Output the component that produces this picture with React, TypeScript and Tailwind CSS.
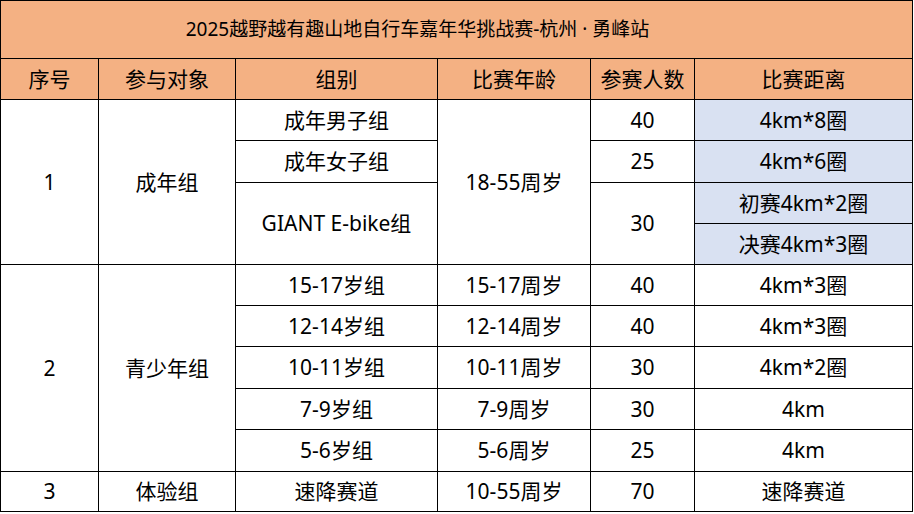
import React from "react";

const font = { fontFamily: '"Noto Sans", "Noto Sans CJK SC", sans-serif' };

type Span = { text: string; span: number };

type Row = {
  h: string;
  no?: Span;
  who?: Span;
  group?: Span;
  age?: Span;
  count?: Span;
  dist: string;
  blue?: boolean;
};

const rows: Row[] = [
  { h: "h-[41px]", no: { text: "1", span: 4 }, who: { text: "成年组", span: 4 }, group: { text: "成年男子组", span: 1 }, age: { text: "18-55周岁", span: 4 }, count: { text: "40", span: 1 }, dist: "4km*8圈", blue: true },
  { h: "h-[42px]", group: { text: "成年女子组", span: 1 }, count: { text: "25", span: 1 }, dist: "4km*6圈", blue: true },
  { h: "h-[41px]", group: { text: "GIANT E-bike组", span: 2 }, count: { text: "30", span: 2 }, dist: "初赛4km*2圈", blue: true },
  { h: "h-[41px]", dist: "决赛4km*3圈", blue: true },
  { h: "h-[41px]", no: { text: "2", span: 5 }, who: { text: "青少年组", span: 5 }, group: { text: "15-17岁组", span: 1 }, age: { text: "15-17周岁", span: 1 }, count: { text: "40", span: 1 }, dist: "4km*3圈" },
  { h: "h-[41px]", group: { text: "12-14岁组", span: 1 }, age: { text: "12-14周岁", span: 1 }, count: { text: "40", span: 1 }, dist: "4km*3圈" },
  { h: "h-[42px]", group: { text: "10-11岁组", span: 1 }, age: { text: "10-11周岁", span: 1 }, count: { text: "30", span: 1 }, dist: "4km*2圈" },
  { h: "h-[41px]", group: { text: "7-9岁组", span: 1 }, age: { text: "7-9周岁", span: 1 }, count: { text: "30", span: 1 }, dist: "4km" },
  { h: "h-[42px]", group: { text: "5-6岁组", span: 1 }, age: { text: "5-6周岁", span: 1 }, count: { text: "25", span: 1 }, dist: "4km" },
  { h: "h-[40px]", no: { text: "3", span: 1 }, who: { text: "体验组", span: 1 }, group: { text: "速降赛道", span: 1 }, age: { text: "10-55周岁", span: 1 }, count: { text: "70", span: 1 }, dist: "速降赛道" },
];

const cell = "border border-black text-center align-middle p-0 leading-none";

function Cell({ c }: { c?: Span }) {
  if (!c) return null;
  return (
    <td rowSpan={c.span} className={cell}>
      {c.text}
    </td>
  );
}

export default function App() {
  return (
    <div className="w-[914px] h-[514px] bg-white overflow-hidden text-black" style={font}>
      <table className="border-collapse table-fixed w-[913px] text-[21px]">
        <colgroup>
          <col className="w-[98px]" />
          <col className="w-[137px]" />
          <col className="w-[202px]" />
          <col className="w-[153px]" />
          <col className="w-[104px]" />
          <col className="w-[218px]" />
        </colgroup>
        <thead>
          <tr className="h-[58px] bg-[#f4b183]">
            <th colSpan={6} className={`${cell} font-normal text-[19px] pr-[78px]`}>
              2025越野越有趣山地自行车嘉年华挑战赛-杭州 · 勇峰站
            </th>
          </tr>
          <tr className="h-[41px] bg-[#f4b183]">
            {["序号", "参与对象", "组别", "比赛年龄", "参赛人数", "比赛距离"].map((h) => (
              <th key={h} className={`${cell} font-normal`}>
                {h}
              </th>
            ))}
          </tr>
        </thead>
        <tbody>
          {rows.map((r, i) => (
            <tr key={i} className={r.h}>
              <Cell c={r.no} />
              <Cell c={r.who} />
              <Cell c={r.group} />
              <Cell c={r.age} />
              <Cell c={r.count} />
              <td className={`${cell} ${r.blue ? "bg-[#d9e1f2]" : ""}`}>{r.dist}</td>
            </tr>
          ))}
        </tbody>
      </table>
    </div>
  );
}
